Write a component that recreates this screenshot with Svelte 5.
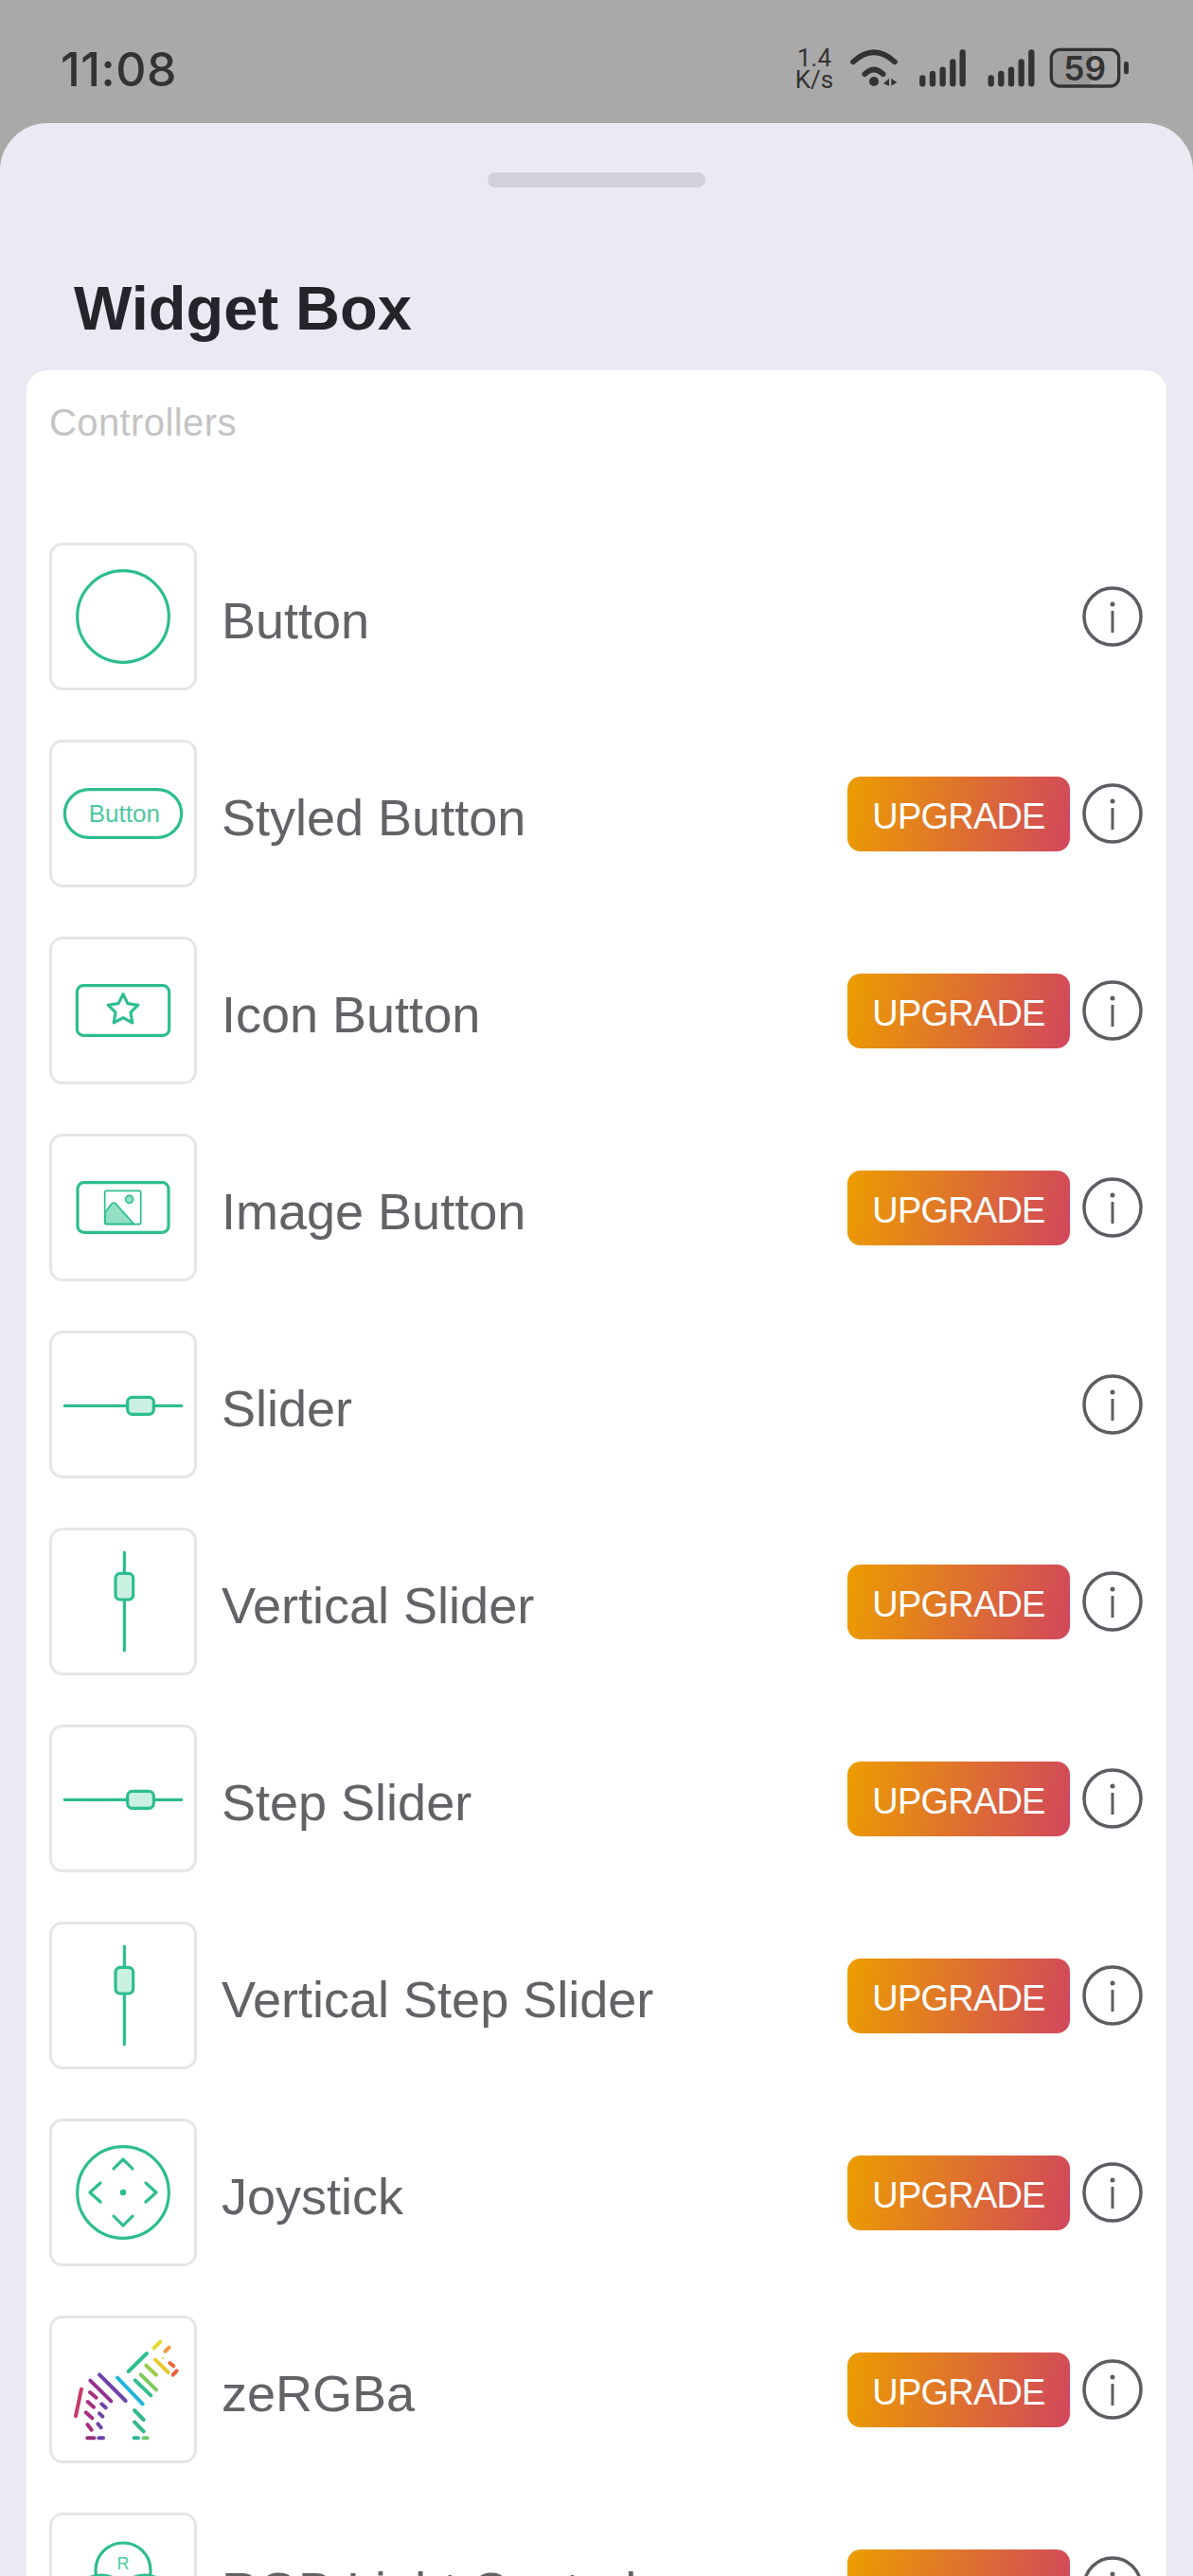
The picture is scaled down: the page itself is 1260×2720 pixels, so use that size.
<script>
	const rows = [
		{ name: 'Button', icon: 'button', pro: false },
		{ name: 'Styled Button', icon: 'styled', pro: true },
		{ name: 'Icon Button', icon: 'star', pro: true },
		{ name: 'Image Button', icon: 'image', pro: true },
		{ name: 'Slider', icon: 'slider', pro: false },
		{ name: 'Vertical Slider', icon: 'vslider', pro: true },
		{ name: 'Step Slider', icon: 'slider', pro: true },
		{ name: 'Vertical Step Slider', icon: 'vslider', pro: true },
		{ name: 'Joystick', icon: 'joystick', pro: true },
		{ name: 'zeRGBa', icon: 'zebra', pro: true },
		{ name: 'RGB Light Control', icon: 'rgb', pro: true }
	];

	// x1, y1, x2, y2, colour
	const zebra = [
		[108, 248, 90, 333, '#c63a6c'],
		[136, 221, 202, 286, '#93308f'],
		[165, 202, 248, 285, '#6f43a8'],
		[222, 212, 302, 295, '#1fb6d8'],
		[278, 220, 328, 268, '#35c08c'],
		[296, 202, 345, 250, '#7cc95a'],
		[313, 173, 345, 203, '#9ccd4a'],
		[257, 192, 315, 135, '#2fc08e'],
		[342, 155, 383, 195, '#e8c82c'],
		[338, 118, 358, 98, '#e3d92f'],
		[373, 128, 386, 116, '#ee9a3e'],
		[388, 165, 400, 175, '#ea6a3c'],
		[398, 203, 410, 190, '#e8623e'],
		[135, 258, 155, 275, '#a8307f'],
		[128, 288, 147, 305, '#a8307f'],
		[122, 322, 142, 340, '#a8307f'],
		[127, 360, 140, 377, '#a8307f'],
		[172, 295, 185, 307, '#6f43a8'],
		[165, 325, 175, 335, '#6f43a8'],
		[160, 358, 170, 370, '#6f43a8'],
		[127, 403, 148, 403, '#96307f'],
		[163, 403, 177, 403, '#6f43a8'],
		[276, 315, 305, 345, '#35b98a'],
		[276, 352, 305, 382, '#35b98a'],
		[275, 403, 288, 403, '#2fb998'],
		[305, 403, 317, 403, '#6cc86a']
	];
</script>

<div class="screen">
	<!-- Status bar -->
	<div class="status">
		<span class="time">11:08</span>
		<div class="status-icons">
			<div class="speed"><span>1.4</span><span>K/s</span></div>
			<svg class="wifi" viewBox="350 90 156 132">
				<path d="M362 136 Q428 76 494 136" fill="none" stroke="#333" stroke-width="17" stroke-linecap="round" />
				<path d="M399 175 Q428 146 457 175" fill="none" stroke="#333" stroke-width="17" stroke-linecap="round" />
				<circle cx="428" cy="198" r="15" fill="#333" />
				<path d="M476 188 V212 L458 205 Z M483 188 V212 L501 201 Z" fill="#333" />
			</svg>
			<svg class="signal" viewBox="570 90 156 132">
				<g stroke="#333" stroke-width="19" stroke-linecap="round">
					<path d="M583 187 V205 M615 174 V205 M647 161 V205 M679 136 V205 M710 106 V205" />
				</g>
			</svg>
			<svg class="signal" viewBox="790 90 156 132">
				<g stroke="#333" stroke-width="19" stroke-linecap="round">
					<path d="M801 187 V205 M833 174 V205 M865 161 V205 M897 136 V205 M929 106 V205" />
				</g>
			</svg>
			<svg class="battery" viewBox="985 90 258 132">
				<path d="M1020 99 H1120 V211 H1020 Q994 211 994 185 V125 Q994 99 1020 99 Z" fill="#999" />
				<rect x="992" y="97" width="214" height="116" rx="27" fill="none" stroke="#333" stroke-width="10" />
				<rect x="1222" y="135" width="15" height="40" rx="7" fill="#333" />
				<text x="1098" y="195" text-anchor="middle" class="battery-num">59</text>
			</svg>
		</div>
	</div>

	<!-- Bottom sheet -->
	<div class="sheet">
		<div class="handle"></div>
		<h1>Widget Box</h1>

		<div class="card">
			<div class="group">Controllers</div>
			<div class="rows">
				{#each rows as row}
					<div class="row">
						<div class="tile">
							<svg viewBox="0 0 468 468" width="156" height="156">
								{#if row.icon === 'button'}
									<circle cx="234" cy="234" r="145" class="line" />
								{:else if row.icon === 'styled'}
									<rect x="49" y="158" width="370" height="152" rx="76" class="line" />
									<text x="238" y="262" text-anchor="middle" class="tile-text">Button</text>
								{:else if row.icon === 'star'}
									<rect x="88" y="155" width="292" height="158" rx="20" class="line" />
									<path d="M234 182 L248.7 211.8 L281.6 216.6 L257.8 239.7 L263.4 272.5 L234 257 L204.6 272.5 L210.2 239.7 L186.4 216.6 L219.3 211.8 Z" class="line" />
								{:else if row.icon === 'image'}
									<rect x="90" y="155" width="288" height="158" rx="20" class="line" />
									<rect x="176" y="181" width="114" height="106" rx="6" class="thin" />
									<circle cx="254" cy="208" r="12" class="thin fill" />
									<path d="M177 250 L198 222 Q204 216 211 222 L268 286 L184 286 Q177 286 177 280 Z" class="thin fill" />
								{:else if row.icon === 'slider'}
									<path d="M49 238 H419" class="line" />
									<rect x="248" y="211" width="83" height="54" rx="15" class="line knob" />
								{:else if row.icon === 'vslider'}
									<path d="M238 78 V389" class="line" />
									<rect x="210" y="145" width="56" height="83" rx="15" class="line knob" />
								{:else if row.icon === 'joystick'}
									<circle cx="234" cy="234" r="145" class="line" />
									<path d="M204 159 L234 129 L264 159 M204 309 L234 339 L264 309 M162 204 L129 234 L162 264 M306 204 L339 234 L306 264" class="line" />
									<circle cx="234" cy="234" r="10" fill="#2dbd8f" />
								{:else if row.icon === 'zebra'}
									<g transform="translate(-6 -15)">
										{#each zebra as z}
											<line x1={z[0]} y1={z[1]} x2={z[2]} y2={z[3]} stroke={z[4]} stroke-width="12" stroke-linecap="round" />
										{/each}
										<circle cx="367" cy="150" r="3" fill="#e8c82c" />
									</g>
								{:else if row.icon === 'rgb'}
									<circle cx="234" cy="183" r="87" class="line" />
									<circle cx="165" cy="285" r="87" class="line" />
									<circle cx="303" cy="285" r="87" class="line" />
									<text x="234" y="180" text-anchor="middle" class="tile-text r">R</text>
								{/if}
							</svg>
						</div>
						<span class="label">{row.name}</span>
						{#if row.pro}
							<button class="upgrade">UPGRADE</button>
						{/if}
						<svg class="info" viewBox="0 0 64 64" width="64" height="64">
							<circle cx="32" cy="32" r="30" fill="none" stroke="#5c5c62" stroke-width="3.5" />
							<circle cx="32" cy="19" r="2.5" fill="#5c5c62" />
							<path d="M32 26 V49" stroke="#5c5c62" stroke-width="3" />
						</svg>
					</div>
				{/each}
			</div>
		</div>
	</div>
</div>

<style>
	:global(body) {
		margin: 0;
		background: #e9eaf2;
	}
	.screen {
		height: 2720px;
		overflow: hidden;
		background: #a9a9a9;
		font-family: "Liberation Sans", Arial, sans-serif;
	}

	/* Status bar */
	.status {
		height: 130px;
		box-sizing: border-box;
		padding: 50px 66px 0 64px;
		display: flex;
		justify-content: space-between;
		align-items: flex-start;
		color: #333;
	}
	.time {
		margin-top: 1px;
		font-family: Inter, sans-serif;
		font-size: 50px;
		font-weight: 500;
		letter-spacing: 0.5px;
		line-height: 44px;
	}
	.status-icons {
		display: flex;
		align-items: flex-start;
	}
	.speed {
		width: 44px;
		margin-right: 15px;
		display: flex;
		flex-direction: column;
		align-items: center;
		font-family: Roboto, sans-serif;
		font-size: 26px;
		line-height: 23px;
	}
	.wifi, .signal {
		width: 52px;
		height: 44px;
		margin-right: 21px;
	}
	.signal:nth-of-type(3) {
		margin-right: 13px;
	}
	.battery {
		width: 86px;
		height: 44px;
	}
	.battery-num {
		font-family: Inter, sans-serif;
		font-size: 106px;
		font-weight: 600;
		fill: #333;
	}

	/* Sheet */
	.sheet {
		background: #e9eaf2;
		border-radius: 50px 50px 0 0;
		padding-top: 52px;
	}
	.handle {
		width: 230px;
		height: 16px;
		margin: 0 auto;
		border-radius: 8px;
		background: #d1d2db;
	}
	h1 {
		margin: 91px 0 28px 78px;
		font-size: 65px;
		line-height: 74px;
		font-weight: 700;
		color: #24252b;
	}

	/* Card */
	.card {
		margin: 0 28px;
		padding: 31px 25px 40px 24px;
		background: #fff;
		border-radius: 22px 22px 0 0;
	}
	.group {
		font-size: 40px;
		line-height: 48px;
		letter-spacing: 0.4px;
		color: #c4c4c4;
		margin-bottom: 103px;
	}
	.rows {
		display: flex;
		flex-direction: column;
		gap: 52px;
	}
	.row {
		display: flex;
		align-items: center;
		height: 156px;
	}
	.tile {
		width: 156px;
		height: 156px;
		box-sizing: border-box;
		border: 3px solid #e6e6e6;
		border-radius: 14px;
		flex-shrink: 0;
		position: relative;
	}
	.tile svg {
		position: absolute;
		left: -3px;
		top: -3px;
	}
	.line {
		fill: none;
		stroke: #2dbd8f;
		stroke-width: 9.5;
		stroke-linecap: round;
		stroke-linejoin: round;
	}
	.thin {
		fill: none;
		stroke: #2dbd8f;
		stroke-width: 5;
		stroke-linejoin: round;
	}
	.thin.fill {
		fill: #93e0c5;
	}
	.knob {
		fill: #c9f0e0;
	}
	.tile-text {
		font-size: 78px;
		fill: #4ec9a2;
	}
	.tile-text.r {
		font-size: 54px;
	}
	.label {
		flex: 1;
		margin-left: 26px;
		padding-top: 8px;
		font-size: 54px;
		line-height: 62px;
		color: #626267;
	}
	.upgrade {
		width: 235px;
		height: 79px;
		padding: 7px 0 0;
		border: none;
		border-radius: 14px;
		background: linear-gradient(100deg, #ec9d00, #d1475c);
		color: #fff;
		font-family: inherit;
		font-size: 38px;
		letter-spacing: -0.8px;
	}
	.info {
		margin-left: 13px;
		flex-shrink: 0;
	}
</style>
